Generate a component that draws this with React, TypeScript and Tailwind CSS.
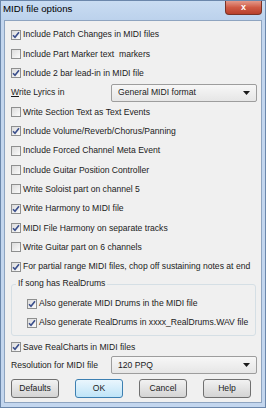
import React from "react";

const font = { fontFamily: '"Liberation Sans", Arial, sans-serif' };

function Check({ checked }: { checked: boolean }) {
  return (
    <div className="w-[10px] h-[10px] border border-[#8e8f8f] bg-gradient-to-br from-[#dcdcdc] to-[#fbfbfb] flex items-center justify-center shrink-0">
      {checked && (
        <svg width="8" height="8" viewBox="0 0 8 8">
          <path d="M1 4.2 L3 6.3 L7 1.2" fill="none" stroke="#3b4f8c" strokeWidth="1.6" />
        </svg>
      )}
    </div>
  );
}

function Row({ checked, label }: { checked: boolean; label: string }) {
  return (
    <div className="h-[19.33px] flex items-center gap-[2px]">
      <Check checked={checked} />
      <span className="text-[8.6px] text-[#1b1b1b] whitespace-pre leading-none">{label}</span>
    </div>
  );
}

function Combo({ text }: { text: string }) {
  return (
    <div className="w-[146px] h-[18px] border border-[#9d9d9d] rounded-[2px] bg-gradient-to-b from-[#f7f7f7] to-[#e6e6e6] flex items-center pl-[6px] pr-[6px]">
      <span className="text-[8.6px] text-[#1b1b1b] flex-1 leading-none">{text}</span>
      <svg width="7" height="4" viewBox="0 0 7 4">
        <path d="M0 0 L7 0 L3.5 4 Z" fill="#1b1b1b" />
      </svg>
    </div>
  );
}

function Btn({ label, ok }: { label: string; ok?: boolean }) {
  return (
    <div
      className={
        "w-[48px] h-[19px] rounded-[3px] border flex items-center justify-center text-[8.6px] text-[#1b1b1b] leading-none " +
        (ok
          ? "border-[#3c7fb1] bg-gradient-to-b from-[#eaf6fd] to-[#bee4f8]"
          : "border-[#707070] bg-gradient-to-b from-[#f2f2f2] to-[#d4d4d4]")
      }
    >
      {label}
    </div>
  );
}

export default function App() {
  return (
    <div className="w-[266px] h-[408px] bg-[#c3d6ee] border border-[#6b87ab] flex flex-col" style={font}>
      <div className="h-[19px] flex items-start justify-between bg-gradient-to-b from-[#c9dcf2] to-[#bcd2ec]">
        <span className="text-[9.7px] text-black pl-[2px] pt-[3px] leading-none">MIDI file options</span>
        <div className="w-[37px] h-[14px] mr-[3px] rounded-b-[4px] border border-t-0 border-[#7a3326] bg-gradient-to-b from-[#e3998a] via-[#cf5a45] to-[#b8402b] flex items-center justify-center">
          <span className="text-white text-[9px] font-bold leading-none">x</span>
        </div>
      </div>
      <div className="flex-1 mx-[3px] mb-[4px] bg-[#f0f0f0] border border-[#8ea4c0] pl-[6px] pr-[4px] pt-[4px] flex flex-col">
        <Row checked label="Include Patch Changes in MIDI files" />
        <Row checked={false} label="Include Part Marker text  markers" />
        <Row checked label="Include 2 bar lead-in in MIDI file" />
        <div className="h-[19.33px] flex items-center justify-between">
          <span className="text-[8.6px] text-[#1b1b1b] leading-none">
            <span className="underline">W</span>rite Lyrics in
          </span>
          <Combo text="General MIDI format" />
        </div>
        <Row checked={false} label="Write Section Text as Text Events" />
        <Row checked label="Include Volume/Reverb/Chorus/Panning" />
        <Row checked={false} label="Include Forced Channel Meta Event" />
        <Row checked={false} label="Include Guitar Position Controller" />
        <Row checked={false} label="Write Soloist part on channel 5" />
        <Row checked label="Write Harmony to MIDI file" />
        <Row checked label="MIDI File Harmony on separate tracks" />
        <Row checked={false} label="Write Guitar part on 6 channels" />
        <Row checked label="For partial range MIDI files, chop off sustaining notes at end" />
        <div className="relative mt-[8px] mr-[1px] border border-[#d5dfe5] rounded-[3px] pl-[15px] pt-[9px] pb-[3px]">
          <span className="absolute left-[4px] top-[-6px] bg-[#f0f0f0] px-[2px] text-[8.6px] text-[#1b1b1b] leading-none">
            If song has RealDrums
          </span>
          <div className="h-[19px] flex items-center gap-[2px]">
            <Check checked />
            <span className="text-[8.6px] text-[#1b1b1b] whitespace-nowrap leading-none">Also generate MIDI Drums in the MIDI file</span>
          </div>
          <div className="h-[19px] flex items-center gap-[2px]">
            <Check checked />
            <span className="text-[8.6px] text-[#1b1b1b] whitespace-nowrap leading-none">Also generate RealDrums in xxxx_RealDrums.WAV file</span>
          </div>
        </div>
        <div className="mt-[1px]">
          <Row checked label="Save RealCharts in MIDI files" />
        </div>
        <div className="h-[17px] flex items-center justify-between">
          <span className="text-[8.6px] text-[#1b1b1b] leading-none">Resolution for MIDI file</span>
          <Combo text="120 PPQ" />
        </div>
        <div className="mt-[5px] flex gap-[16px]">
          <Btn label="Defaults" />
          <Btn label="OK" ok />
          <Btn label="Cancel" />
          <Btn label="Help" />
        </div>
      </div>
    </div>
  );
}
